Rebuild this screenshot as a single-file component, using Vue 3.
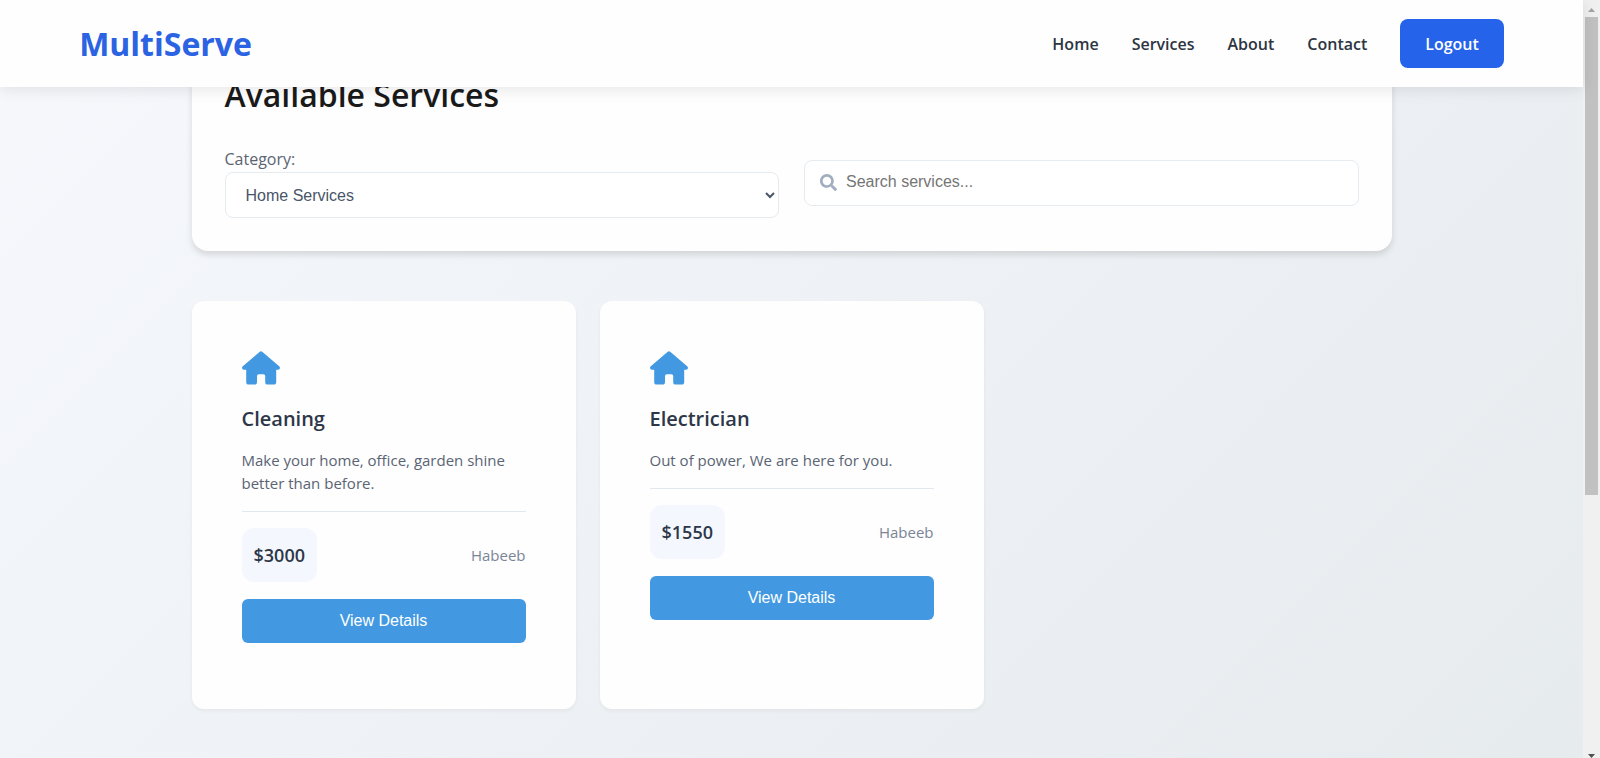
<script setup>
import { ref } from 'vue'

const links = ['Home', 'Services', 'About', 'Contact']
const category = ref('Home Services')
const query = ref('')
const services = [
  { name: 'Cleaning', text: 'Make your home, office, garden shine better than before.', price: '$3000', provider: 'Habeeb' },
  { name: 'Electrician', text: 'Out of power, We are here for you.', price: '$1550', provider: 'Habeeb' },
]
</script>

<template>
  <div class="window">
    <div class="page">
      <header class="header">
        <a href="#" class="logo">MultiServe</a>
        <nav class="nav">
          <a v-for="link in links" :key="link" href="#" class="link">{{ link }}</a>
          <button type="button" class="logout">Logout</button>
        </nav>
      </header>

      <main class="main">
        <section class="panel">
          <h1 class="heading">Available Services</h1>
          <div class="filters">
            <div class="field">
              <label for="category" class="label">Category:</label>
              <select id="category" v-model="category" class="control select">
                <option>Home Services</option>
              </select>
            </div>
            <div class="search">
              <svg class="search-icon" viewBox="0 0 512 512" aria-hidden="true">
                <path d="M505 442.700L405.300 343c-4.500-4.500-10.600-7-17-7H372c27.600-35.300 44-79.700 44-128C416 93.100 322.900 0 208 0S0 93.100 0 208s93.100 208 208 208c48.300 0 92.700-16.400 128-44v16.300c0 6.400 2.500 12.500 7 17l99.700 99.700c9.400 9.400 24.600 9.400 33.900 0l28.300-28.300c9.400-9.400 9.400-24.600.1-34zM208 336c-70.700 0-128-57.200-128-128 0-70.700 57.200-128 128-128 70.700 0 128 57.200 128 128 0 70.700-57.200 128-128 128z" />
              </svg>
              <input v-model="query" type="text" class="control input" placeholder="Search services..." aria-label="Search services" />
            </div>
          </div>
        </section>

        <section class="cards">
          <article v-for="s in services" :key="s.name" class="card">
            <svg class="house" viewBox="0 0 38 34" aria-hidden="true">
              <path d="M17.500 1Q19 -.3 20.500 1L37.200 15.200Q38.300 16.300 37.800 17.500Q37.300 18.700 36 18.700H34.200V31Q34.200 33.600 31.600 33.600H25.800Q23.200 33.600 23.200 31V25Q23.200 23.200 21.400 23.200H16.800Q15 23.200 15 25V31Q15 33.600 12.400 33.600H6.800Q4.200 33.600 4.200 31V18.700H2Q.7 18.700 .2 17.500Q-.3 16.300 .8 15.200Z" />
            </svg>
            <h2 class="name">{{ s.name }}</h2>
            <p class="text">{{ s.text }}</p>
            <div class="meta">
              <span class="price">{{ s.price }}</span>
              <span class="provider">{{ s.provider }}</span>
            </div>
            <button type="button" class="details">View Details</button>
          </article>
        </section>
      </main>
    </div>

    <div class="scrollbar" aria-hidden="true">
      <svg class="arrow" viewBox="0 0 17 17"><path d="M5 12h7L8.500 8z" fill="#a3a3a3" /></svg>
      <div class="track"><div class="thumb"></div></div>
      <svg class="arrow" viewBox="0 0 17 17"><path d="M5 13h7L8.500 17z" fill="#505050" /></svg>
    </div>
  </div>
</template>

<style>
body {
  margin: 0;
}
</style>

<style scoped>
.window {
  display: flex;
  height: 100vh;
  overflow: hidden;
  font-family: "Open Sans", "Noto Sans", sans-serif;
  font-size: 16px;
}
.page {
  position: relative;
  flex: 1;
  min-width: 0;
  background: linear-gradient(135deg, #f6f8fc 0%, #e6ebee 100%);
}
.header {
  position: absolute;
  inset: 0 0 auto;
  z-index: 1;
  box-sizing: border-box;
  display: flex;
  align-items: center;
  justify-content: space-between;
  padding: 18px 5%;
  background: #fefefe;
  box-shadow: 0 2px 15px rgba(0, 0, 0, 0.1);
}
.logo {
  color: #2b63e3;
  font-size: 32px;
  line-height: 51px;
  font-weight: 700;
  text-decoration: none;
}
.nav {
  display: flex;
  align-items: center;
  gap: 33px;
}
.link {
  color: #2d3542;
  font-weight: 600;
  font-size: 16px;
  text-decoration: none;
}
.logout {
  padding: 13px 25px 11px;
  border: 0;
  border-radius: 8px;
  background: #2563eb;
  color: #fff;
  font: 600 16px/25px "Open Sans", "Noto Sans", sans-serif;
}
.main {
  max-width: 1200px;
  margin: 0 auto;
  padding-top: 40px;
}
.panel {
  padding: 32px 33px 33px;
  border-radius: 16px;
  background: #fefefe;
  box-shadow: 0 4px 6px rgba(0, 0, 0, 0.12);
}
.heading {
  margin: 0 0 29px;
  color: #1a1a1a;
  font-size: 32px;
  line-height: 46px;
  font-weight: 600;
}
.filters {
  display: grid;
  grid-template-columns: 1fr 1fr;
  gap: 25px;
  align-items: center;
}
.field {
  display: flex;
  flex-direction: column;
}
.label {
  color: #5a6472;
  line-height: 25px;
}
.control {
  box-sizing: border-box;
  width: 100%;
  height: 46px;
  border: 1px solid #e6ebf0;
  border-radius: 8px;
  background: #fff;
  color: #4a5568;
  font-family: "Liberation Sans", Arial, sans-serif;
  font-size: 16px;
}
.select {
  padding: 0 0 0 16px;
}
.search {
  position: relative;
  display: flex;
}
.input {
  padding: 0 16px 2px 41px;
}
.input::placeholder {
  color: #757575;
}
.search-icon {
  position: absolute;
  left: 16px;
  top: 14px;
  width: 17px;
  height: 17px;
  fill: #a0aec0;
}
.cards {
  display: grid;
  grid-template-columns: repeat(3, 1fr);
  gap: 24px;
  margin-top: 50px;
}
.card {
  display: flex;
  flex-direction: column;
  padding: 50px 50px 66px;
  border-radius: 12px;
  background: #fefefe;
  box-shadow: 0 2px 4px rgba(0, 0, 0, 0.05);
}
.house {
  width: 38px;
  height: 34px;
  fill: #4299e1;
}
.name {
  margin: 16px 0 12px;
  color: #2d3748;
  font-size: 20px;
  line-height: 36px;
  font-weight: 600;
}
.text {
  margin: 0 0 16px;
  color: #5a6474;
  font-size: 15px;
  line-height: 23px;
}
.meta {
  display: flex;
  align-items: center;
  justify-content: space-between;
  margin-bottom: 17px;
  padding-top: 16px;
  border-top: 1px solid #e2e8f0;
}
.price {
  padding: 12px;
  border-radius: 12px;
  background: #f4f7fe;
  color: #2d3748;
  font-size: 18px;
  line-height: 30px;
  font-weight: 600;
}
.provider {
  color: #7a8596;
  font-size: 15px;
}
.details {
  height: 44px;
  border: 0;
  border-radius: 6px;
  background: #4299e1;
  color: #fff;
  font-family: "Liberation Sans", Arial, sans-serif;
  font-size: 16px;
}
.scrollbar {
  display: flex;
  flex-direction: column;
  width: 17px;
  background: #f0f0f0;
}
.arrow {
  width: 17px;
  height: 17px;
}
.track {
  flex: 1;
  padding: 0 2px;
}
.thumb {
  height: 66%;
  background: #c1c1c1;
}
</style>
